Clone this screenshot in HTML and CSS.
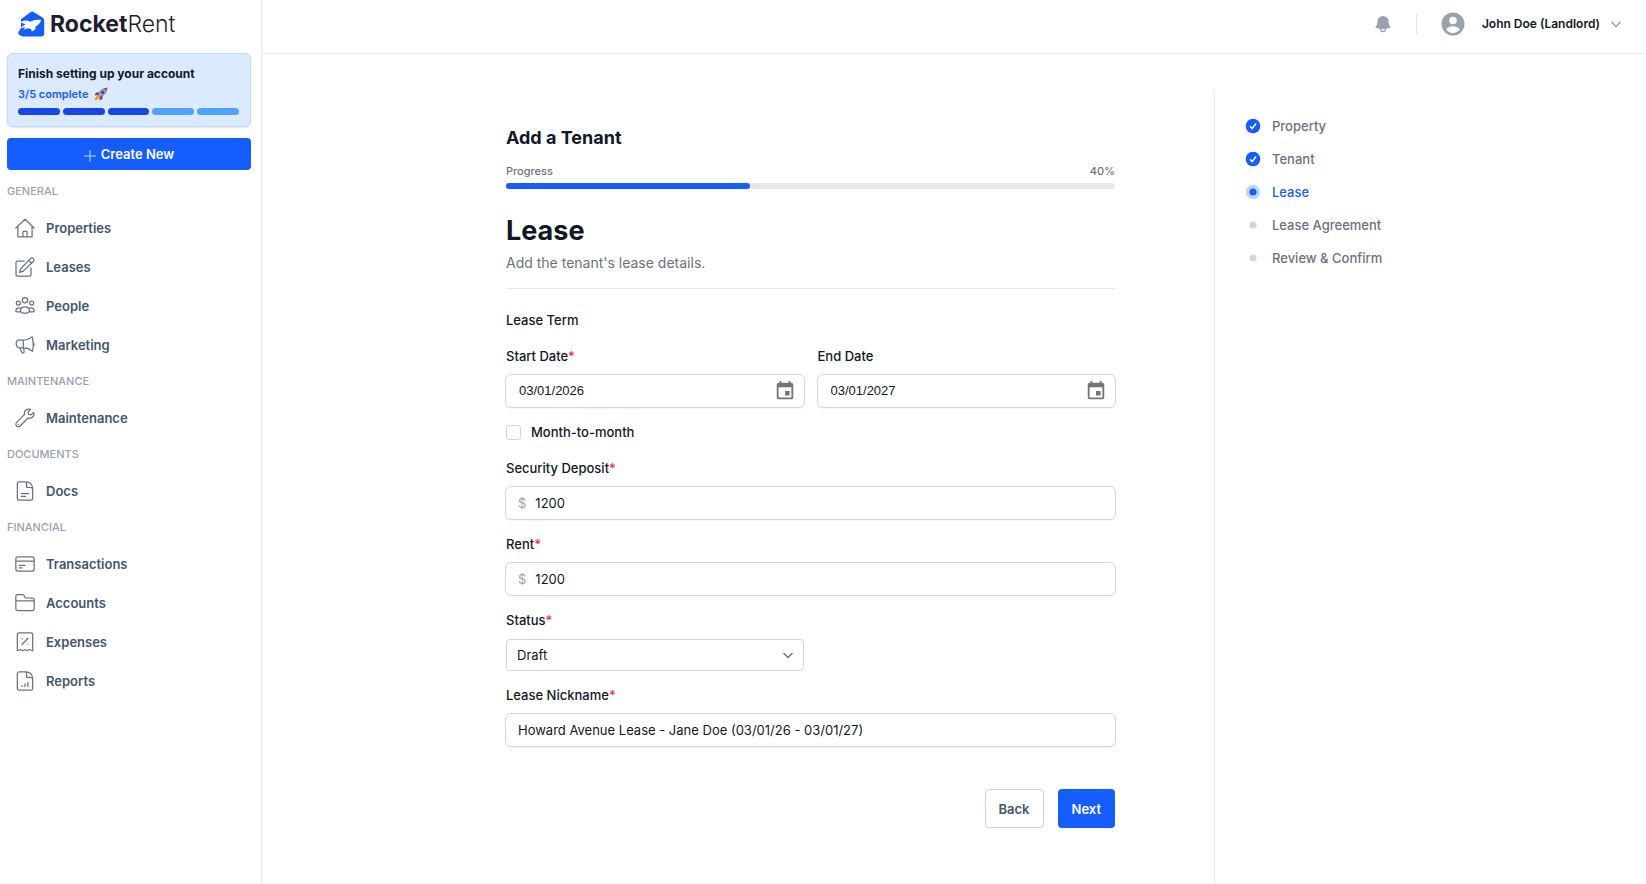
FILE: index.html
```
<!DOCTYPE html>
<html lang="en">
<head>
  <meta charset="UTF-8">
  <meta name="viewport" content="width=device-width, initial-scale=1">
  <title>Add a Tenant - RocketRent</title>
  <link rel="stylesheet" href="styles.css">
</head>
<body>
  <div class="app">

    <aside class="sidebar">
      <a class="logo" href="#">
        <svg width="27" height="26" viewBox="0 0 27 26" aria-hidden="true">
          <path fill="#155dfc" d="M3 8.200 12.500 1.200a3 3 0 0 1 3.400 0L24.600 6.600A3.200 3.200 0 0 1 26.200 9.400V22.500A3 3 0 0 1 23.200 25.500H4.500L.8 23.500Q-.4 21.500 1 20L3 17Z"/>
          <path fill="#fff" d="M2.600 11.400C4.500 9.600 6.500 9 9 9.600L12.600 10.800C15 8.800 19 8.200 23.200 9 22.400 11.800 20.400 14 17.600 15.400L17.200 18.400 13.800 20.600 13.200 18C11.800 18 10.800 17.800 9.800 17.200L5.400 18.800 7.400 16.200 2 17 7.600 13.200Z"/>
        </svg>
        <span class="logo-text">Rocket<span class="logo-light">Rent</span></span>
      </a>

      <section class="setup">
        <h2>Finish setting up your account</h2>
        <p>3/5 complete
          <svg width="14" height="14" viewBox="0 0 14 14" aria-hidden="true">
            <path fill="#f59e0b" d="M3.500 8.500C1.800 9.200 1 11.200.6 13.400 2.800 13 4.800 12.200 5.500 10.500Z"/>
            <path fill="#b91c1c" d="M5 5.200 1.800 5.800.8 8.600 4 8ZM8.800 9 8.200 12.200 5.400 13.200 6 10Z"/>
            <path fill="#94a3b8" stroke="#475569" stroke-width=".6" d="M3.800 8.200C5 4.800 7.600 2 11 1.400L12.600 3C12 6.400 9.200 9 5.800 10.200Z"/>
            <path fill="#dc2626" d="M10.200 1.400 13.600.4 12.600 3.800Z"/>
            <circle cx="8.600" cy="5.400" r="1.300" fill="#1e3a8a"/>
          </svg>
        </p>
        <div class="setup-bar">
          <span class="done"></span><span class="done"></span><span class="done"></span><span></span><span></span>
        </div>
      </section>

      <button class="btn btn-primary create" type="button">
        <svg width="12" height="12" viewBox="0 0 12 12" aria-hidden="true"><path d="M6 0v12M0 6h12" stroke="#bedbff"/></svg>
        Create New
      </button>

      <nav class="nav">
        <h3>GENERAL</h3>
        <a href="#">
          <svg class="icon" viewBox="0 0 24 24"><path d="M1 12 12 1.500 23 12M3.500 9.800V22.500h17V9.800M9.500 22.500v-5.500a1 1 0 0 1 1-1h3a1 1 0 0 1 1 1v5.500"/></svg>
          Properties
        </a>
        <a href="#">
          <svg class="icon" viewBox="0 0 24 24"><path d="m7 14 11.500-12a2.400 2.400 0 0 1 3.500 3.400L10 17l-4.500 1.500ZM16.500 4l3.500 3.500M11 5H3.200A2 2 0 0 0 1.200 7v14a2 2 0 0 0 2 2h14a2 2 0 0 0 2-2v-8"/></svg>
          Leases
        </a>
        <a href="#">
          <svg class="icon" viewBox="0 0 24 24"><circle cx="12" cy="5" r="3.200"/><circle cx="4" cy="8.500" r="2.400"/><circle cx="20" cy="8.500" r="2.400"/><path d="M6.500 18.500c0-3.500 2.400-5.500 5.500-5.500s5.500 2 5.500 5.500c-3 3.200-8 3.200-11 0ZM6.500 19H2.300A1.300 1.300 0 0 1 1 17.500c.4-2.400 2.400-3.500 5.800-3M17.500 19h4.200a1.300 1.300 0 0 0 1.300-1.500c-.4-2.400-2.400-3.500-5.800-3"/></svg>
          People
        </a>
        <a href="#">
          <svg class="icon" viewBox="0 0 24 24"><path d="M10 6H5.500a4 4 0 0 0-4 5c.3 2.500 1.700 4.500 4.500 4.500h4M10 6v9.500M10 6c4 0 8-1.600 10.500-4 1.400 5 2 11 .5 17.500-3-2.500-7-4-11-4M22 9.500c1 .5 1 2.500.5 3.200M6 15.500l2 5.200a1.600 1.600 0 0 0 3-1l-.8-4"/></svg>
          Marketing
        </a>
        <h3>MAINTENANCE</h3>
        <a href="#">
          <svg class="icon" viewBox="0 0 24 24"><path d="M22.500 5.500 19 8.300l-2.700-.6L15.700 5l2.800-3.400c-4-1.400-8 1.500-7 6L2 17.300a2.900 2.900 0 0 0 4.200 4.300L15.500 12c4.500 1.400 8.500-2.200 7-6.500Z"/><path d="M4.400 19.500h.1"/></svg>
          Maintenance
        </a>
        <h3>DOCUMENTS</h3>
        <a href="#">
          <svg class="icon" viewBox="0 0 24 24"><path d="M13.500 1H4.800a2 2 0 0 0-2 2v18a2 2 0 0 0 2 2h14.400a2 2 0 0 0 2-2V8.500C21.200 4.500 17.500 1 13.500 1ZM13 1c1.500 1.500 1 4.500 1 6.500h3.500c2 0 3.500.5 3.700 2M7.500 15h9M7.500 18.500h5"/></svg>
          Docs
        </a>
        <h3>FINANCIAL</h3>
        <a href="#">
          <svg class="icon" viewBox="0 0 24 24"><rect x="1" y="3.500" width="22" height="17" rx="2.500"/><path d="M1 8.500h22M5 13.500h7M5 16.500h3.500"/></svg>
          Transactions
        </a>
        <a href="#">
          <svg class="icon" viewBox="0 0 24 24"><path d="M1 9.500h22M1 19V4a2 2 0 0 1 2-2h6a2 2 0 0 1 2 1.500l.8 1.500a2 2 0 0 0 1.700 1H21a2 2 0 0 1 2 2v11a2 2 0 0 1-2 2H3a2 2 0 0 1-2-2Z"/></svg>
          Accounts
        </a>
        <a href="#">
          <svg class="icon" viewBox="0 0 24 24"><path d="M2.800 22.500V3a2 2 0 0 1 2-2h14.400a2 2 0 0 1 2 2v19.500L17.500 21l-2.700 1.500L12 21l-2.800 1.500L6.500 21ZM15.500 7.500l-7 7.500M8.500 8h.1M15.500 14.500h.1"/></svg>
          Expenses
        </a>
        <a href="#">
          <svg class="icon" viewBox="0 0 24 24"><path d="M13.500 1H4.800a2 2 0 0 0-2 2v18a2 2 0 0 0 2 2h14.400a2 2 0 0 0 2-2V8.500C21.200 4.500 17.500 1 13.500 1ZM13 1c1.500 1.500 1 4.500 1 6.500h3.500c2 0 3.500.5 3.700 2M8.500 18.500v-1M12 18.500v-3M15.500 18.500v-5"/></svg>
          Reports
        </a>
      </nav>
    </aside>

    <div class="page">
      <header class="topbar">
        <button class="icon-btn" type="button" aria-label="Notifications">
          <svg width="20" height="20" viewBox="0 0 24 24" fill="#99a1af"><path fill-rule="evenodd" d="M5.250 9a6.750 6.750 0 0 1 13.500 0v.750c0 2.120.8 4.060 2.120 5.520a.75.75 0 0 1-.3 1.210c-1.540.57-3.160 1-4.830 1.250a3.750 3.750 0 1 1-7.480 0 24.600 24.600 0 0 1-4.830-1.250.75.75 0 0 1-.3-1.210A8.220 8.220 0 0 0 5.250 9.750Zm4.500 8.900a2.250 2.250 0 1 0 4.500 0 25 25 0 0 1-4.500 0Z"/></svg>
        </button>
        <span class="divider"></span>
        <button class="user" type="button">
          <svg width="24" height="24" viewBox="0 0 24 24"><circle cx="12" cy="12" r="11.500" fill="#99a1af"/><circle cx="12" cy="8.500" r="3.800" fill="#fff"/><path fill="#fff" d="M5 17.600c1.600-2.300 4.200-3.300 7-3.300s5.400 1 7 3.300a9 9 0 0 1-14 0Z"/></svg>
          <span>John Doe (Landlord)</span>
          <svg width="12" height="12" viewBox="0 0 12 12" fill="none" stroke="#99a1af" stroke-width="1.500"><path d="m1.500 4 4.500 4.500L10.500 4"/></svg>
        </button>
      </header>

      <div class="wizard">
        <main class="content">
          <h1>Add a Tenant</h1>
          <div class="progress-label"><span>Progress</span><span>40%</span></div>
          <div class="progress"><div class="progress-fill" style="width: 40%"></div></div>

          <div class="intro">
            <h2>Lease</h2>
            <p>Add the tenant's lease details.</p>
          </div>

          <form>
            <p class="term">Lease Term</p>
            <div class="dates">
              <div class="field">
                <label for="start">Start Date<b>*</b></label>
                <div class="box date-box">
                  <input id="start" type="text" value="03/01/2026">
                  <button class="icon-btn" type="button" aria-label="Choose start date">
                    <svg width="22" height="22" viewBox="0 0 24 24" fill="#757575"><path d="M17 12h-5v5h5v-5zM16 1v2H8V1H6v2H5a2 2 0 0 0-2 2v14c0 1.100.9 2 2 2h14c1.100 0 2-.9 2-2V5c0-1.100-.9-2-2-2h-1V1h-2zm3 18H5V8h14v11z"/></svg>
                  </button>
                </div>
              </div>
              <div class="field">
                <label for="end">End Date</label>
                <div class="box date-box">
                  <input id="end" type="text" value="03/01/2027">
                  <button class="icon-btn" type="button" aria-label="Choose end date">
                    <svg width="22" height="22" viewBox="0 0 24 24" fill="#757575"><path d="M17 12h-5v5h5v-5zM16 1v2H8V1H6v2H5a2 2 0 0 0-2 2v14c0 1.100.9 2 2 2h14c1.100 0 2-.9 2-2V5c0-1.100-.9-2-2-2h-1V1h-2zm3 18H5V8h14v11z"/></svg>
                  </button>
                </div>
              </div>
            </div>

            <div class="check">
              <input id="monthly" type="checkbox">
              <label for="monthly">Month-to-month</label>
            </div>

            <div class="field">
              <label for="deposit">Security Deposit<b>*</b></label>
              <div class="box"><span class="prefix">$</span><input id="deposit" type="text" value="1200"></div>
            </div>
            <div class="field">
              <label for="rent">Rent<b>*</b></label>
              <div class="box"><span class="prefix">$</span><input id="rent" type="text" value="1200"></div>
            </div>
            <div class="field">
              <label for="status">Status<b>*</b></label>
              <div class="select">
                <select id="status"><option>Draft</option><option>Active</option></select>
                <svg width="12" height="12" viewBox="0 0 12 12" fill="none" stroke="#6a7282" stroke-width="1.500"><path d="m1.500 4 4.500 4.500L10.500 4"/></svg>
              </div>
            </div>
            <div class="field">
              <label for="nickname">Lease Nickname<b>*</b></label>
              <div class="box"><input id="nickname" type="text" value="Howard Avenue Lease - Jane Doe (03/01/26 - 03/01/27)"></div>
            </div>

            <div class="actions">
              <button class="btn btn-outline" type="button">Back</button>
              <button class="btn btn-primary" type="submit">Next</button>
            </div>
          </form>
        </main>

        <aside class="steps">
          <ol>
            <li><svg width="16" height="16" viewBox="0 0 16 16"><circle cx="8" cy="8" r="7.300" fill="#155dfc"/><path d="m5 8.300 2.200 2.200L11 5.500" fill="none" stroke="#fff" stroke-width="1.500"/></svg>Property</li>
            <li><svg width="16" height="16" viewBox="0 0 16 16"><circle cx="8" cy="8" r="7.300" fill="#155dfc"/><path d="m5 8.300 2.200 2.200L11 5.500" fill="none" stroke="#fff" stroke-width="1.500"/></svg>Tenant</li>
            <li class="current"><svg width="16" height="16" viewBox="0 0 16 16"><circle cx="8" cy="8" r="7.300" fill="#bedbff"/><circle cx="8" cy="8" r="3.600" fill="#155dfc"/></svg>Lease</li>
            <li><svg width="16" height="16" viewBox="0 0 16 16"><circle cx="8" cy="8" r="3.600" fill="#d1d5dc"/></svg>Lease Agreement</li>
            <li><svg width="16" height="16" viewBox="0 0 16 16"><circle cx="8" cy="8" r="3.600" fill="#d1d5dc"/></svg>Review &amp; Confirm</li>
          </ol>
        </aside>
      </div>
    </div>

  </div>
</body>
</html>
```
FILE: styles.css
```
* {
  box-sizing: border-box;
}
body {
  margin: 0;
  font-family: Inter, "Liberation Sans", sans-serif;
  font-size: 13px;
  line-height: 20px;
  color: #101828;
  background: #fff;
}
h1, h2, h3, p, ol {
  margin: 0;
  padding: 0;
}
button, input, select {
  font: inherit;
  color: inherit;
}
.app {
  display: flex;
  min-height: 100vh;
}

/* sidebar */
.sidebar {
  flex: 0 0 262px;
  padding: 10px 10px 0 7px;
  border-right: 1px solid #e5e7eb;
}
.logo {
  display: flex;
  align-items: center;
  gap: 5px;
  height: 28px;
  padding-left: 11px;
  text-decoration: none;
  color: #1e1e2f;
}
.logo-text {
  font-size: 23px;
  font-weight: 700;
}
.logo-light {
  font-weight: 300;
}
.setup {
  margin-top: 15px;
  padding: 10px 11px 11px 10px;
  background: #dbeafe;
  border: 1px solid #bedbff;
  border-radius: 6px;
  box-shadow: 0 1px 2px rgba(0, 0, 0, 0.1);
}
.setup h2 {
  font-size: 12px;
  font-weight: 700;
  line-height: 20px;
}
.setup p {
  display: flex;
  align-items: center;
  gap: 6px;
  font-size: 11px;
  font-weight: 600;
  color: #155dfc;
}
.setup-bar {
  display: flex;
  gap: 3px;
  margin-top: 4px;
}
.setup-bar span {
  flex: 1;
  height: 7px;
  border-radius: 4px;
  background: #51a2ff;
}
.setup-bar .done {
  background: #1447e6;
}
.btn {
  border: 1px solid transparent;
  border-radius: 4px;
  padding: 0 13px;
  height: 39px;
  font-weight: 600;
  cursor: pointer;
}
.btn-primary {
  background: #155dfc;
  color: #fff;
}
.btn-outline {
  background: #fff;
  border-color: #cad5e2;
  color: #45556c;
  box-shadow: 0 1px 2px rgba(0, 0, 0, 0.05);
}
.create {
  display: flex;
  align-items: center;
  justify-content: center;
  gap: 5px;
  width: 100%;
  height: 32px;
  margin-top: 11px;
}
.create svg {
  margin-top: 4px;
}
.nav {
  display: flex;
  flex-direction: column;
  gap: 3px;
  margin-top: 6px;
}
.nav h3 {
  font-size: 11px;
  font-weight: 500;
  line-height: 31px;
  color: #99a1af;
}
.nav a {
  display: flex;
  align-items: center;
  gap: 11px;
  height: 36px;
  padding-left: 8px;
  font-weight: 600;
  color: #45556c;
  text-decoration: none;
}
.icon {
  width: 20px;
  height: 20px;
  fill: none;
  stroke: #6a7282;
  stroke-width: 1.5;
  stroke-linecap: round;
  stroke-linejoin: round;
}

/* top bar */
.page {
  flex: 1;
  display: flex;
  flex-direction: column;
  min-width: 0;
}
.topbar {
  display: flex;
  align-items: center;
  justify-content: flex-end;
  height: 54px;
  padding: 0 24px 6px 0;
  border-bottom: 1px solid #e5e7eb;
}
.icon-btn {
  display: flex;
  padding: 0;
  border: 0;
  background: none;
  cursor: pointer;
}
.divider {
  width: 1px;
  height: 20px;
  margin: 0 24px 0 23px;
  background: #e5e7eb;
}
.user {
  display: flex;
  align-items: center;
  padding: 0;
  border: 0;
  background: none;
  font-size: 12px;
  font-weight: 600;
}
.user span {
  margin: 0 10px 0 17px;
}

/* wizard */
.wizard {
  flex: 1;
  display: grid;
  grid-template-columns: minmax(0, 952fr) minmax(0, 432fr);
  padding-top: 36px;
}
.content {
  width: 609px;
  max-width: 90%;
  margin: 34px 99px 0 auto;
}
h1 {
  font-size: 18px;
  font-weight: 700;
  line-height: 28px;
}
.progress-label {
  display: flex;
  justify-content: space-between;
  margin-top: 9px;
  font-size: 11px;
  font-weight: 500;
  color: #6a7282;
}
.progress {
  height: 6px;
  margin-top: 2px;
  border-radius: 3px;
  background: #e5e7eb;
}
.progress-fill {
  height: 100%;
  border-radius: 3px;
  background: #155dfc;
}
.intro {
  margin-top: 22px;
  padding-bottom: 13px;
  border-bottom: 1px solid #e5e7eb;
}
.intro h2 {
  font-size: 27px;
  font-weight: 700;
  line-height: 40px;
}
.intro p {
  font-size: 14px;
  line-height: 24px;
  color: #6a7282;
}
.term {
  margin: 21px 0 16px;
  font-weight: 500;
}
.dates {
  display: grid;
  grid-template-columns: 1fr 1fr;
  gap: 14px;
}
.field {
  margin-bottom: 14px;
}
label {
  display: block;
  font-weight: 500;
}
label b {
  font-weight: 500;
  color: #fb2c36;
}
.box {
  display: flex;
  align-items: center;
  height: 34px;
  margin: 8px -1px 0;
  padding: 0 12px;
  border: 1px solid #d1d5dc;
  border-radius: 6px;
  box-shadow: 0 1px 2px rgba(0, 0, 0, 0.05);
}
.box input {
  flex: 1;
  min-width: 0;
  padding: 0;
  border: 0;
  outline: 0;
  background: none;
}
.date-box {
  padding: 0 8px 0 13px;
  font-family: "Liberation Sans", Arial, sans-serif;
}
.prefix {
  margin-right: 9px;
  color: #99a1af;
}
.check {
  display: flex;
  align-items: center;
  gap: 10px;
  margin-bottom: 16px;
}
.check input {
  appearance: none;
  width: 15px;
  height: 15px;
  margin: 0;
  border: 1px solid #cad5e2;
  border-radius: 3px;
}
.check input:checked {
  background: #155dfc;
}
.select {
  display: grid;
  align-items: center;
  width: calc(50% - 7px);
  margin-top: 9px;
}
.select select {
  grid-area: 1 / 1;
  appearance: none;
  height: 32px;
  padding: 0 10px;
  border: 1px solid #d1d5dc;
  border-radius: 4px;
  background: #fff;
}
.select svg {
  grid-area: 1 / 1;
  justify-self: end;
  margin-right: 10px;
  pointer-events: none;
}
.actions {
  display: flex;
  justify-content: flex-end;
  gap: 14px;
  margin: 42px 0 54px;
}

/* steps */
.steps {
  padding: 26px 0 0 30px;
  border-left: 1px solid #e5e7eb;
}
.steps ol {
  display: grid;
  gap: 13px;
  list-style: none;
}
.steps li {
  display: flex;
  align-items: center;
  gap: 11px;
  font-weight: 500;
  color: #6a7282;
}
.steps .current {
  color: #155dfc;
}
```
